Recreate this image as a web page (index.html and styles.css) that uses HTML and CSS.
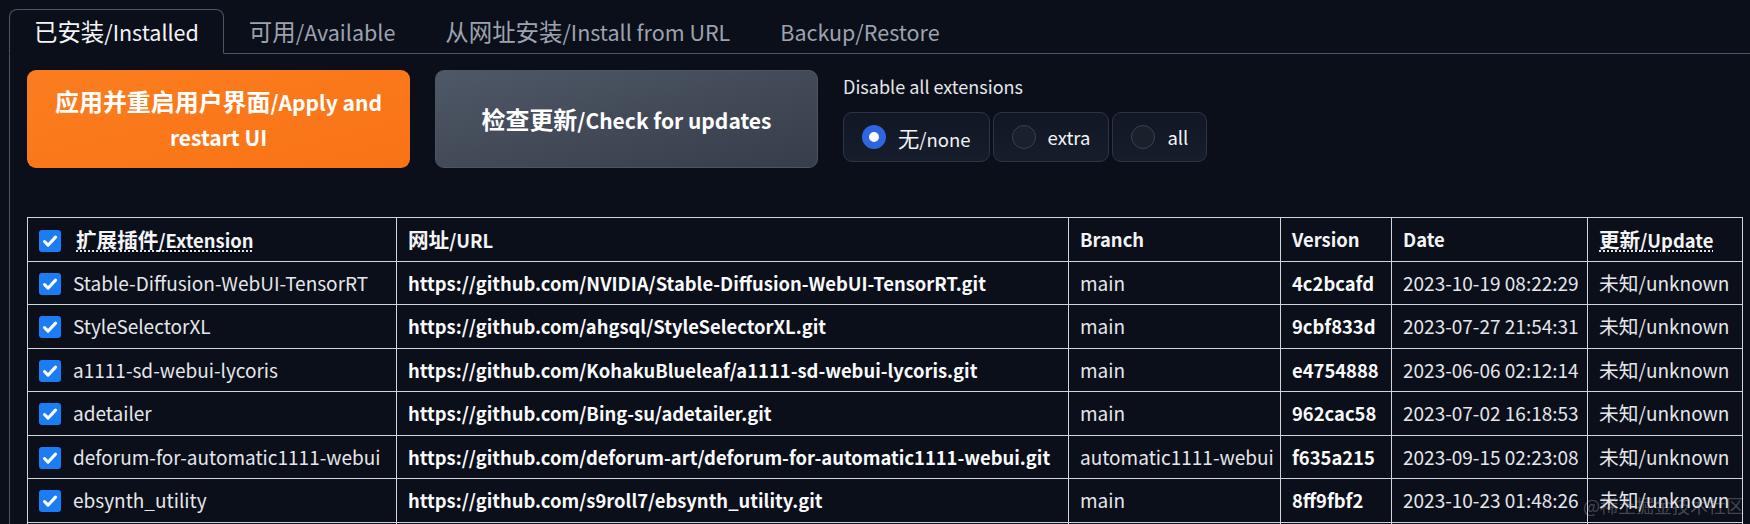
FILE: index.html
```html
<!DOCTYPE html>
<html>
<head>
    <meta charset="UTF-8">
    <title>Extensions</title>
<link rel="stylesheet" href="styles.css">
</head>
<body>

    <div class="tabs">
        <div class="tab-nav">
            <button class="tab active"><span class="zh">已安装</span>/Installed</button>
            <button class="tab"><span class="zh">可用</span>/Available</button>
            <button class="tab"><span class="zh">从网址安装</span>/Install from URL</button>
            <button class="tab">Backup/Restore</button>
        </div>

        <div class="panel">
            <div class="actions">
                <button class="btn primary"><span class="zh">应用并重启用户界面</span>/Apply and restart UI</button>
                <button class="btn secondary"><span class="zh">检查更新</span>/Check for updates</button>
                <div class="disable-group">
                    <span class="group-label">Disable all extensions</span>
                    <div class="radios">
                        <label class="radio selected"><span class="dot"></span><span><span class="zh">无</span>/none</span></label>
                        <label class="radio"><span class="dot"></span>extra</label>
                        <label class="radio"><span class="dot"></span>all</label>
                    </div>
                </div>
            </div>

            <table class="ext-table">
                <thead>
                    <tr>
                        <th class="col-name"><span class="check"></span><abbr><span class="zh">扩展插件</span>/Extension</abbr></th>
                        <th class="col-url"><span class="zh">网址</span>/URL</th>
                        <th class="col-branch">Branch</th>
                        <th class="col-version">Version</th>
                        <th class="col-date">Date</th>
                        <th class="col-update"><abbr><span class="zh">更新</span>/Update</abbr></th>
                    </tr>
                </thead>
                <tbody>
                    <tr>
                        <td><span class="check"></span>Stable-Diffusion-WebUI-TensorRT</td>
                        <td class="url">https://github.com/NVIDIA/Stable-Diffusion-WebUI-TensorRT.git</td>
                        <td>main</td>
                        <td class="version">4c2bcafd</td>
                        <td>2023-10-19 08:22:29</td>
                        <td><span class="zh">未知</span>/unknown</td>
                    </tr>
                    <tr>
                        <td><span class="check"></span>StyleSelectorXL</td>
                        <td class="url">https://github.com/ahgsql/StyleSelectorXL.git</td>
                        <td>main</td>
                        <td class="version">9cbf833d</td>
                        <td>2023-07-27 21:54:31</td>
                        <td><span class="zh">未知</span>/unknown</td>
                    </tr>
                    <tr>
                        <td><span class="check"></span>a1111-sd-webui-lycoris</td>
                        <td class="url">https://github.com/KohakuBlueleaf/a1111-sd-webui-lycoris.git</td>
                        <td>main</td>
                        <td class="version">e4754888</td>
                        <td>2023-06-06 02:12:14</td>
                        <td><span class="zh">未知</span>/unknown</td>
                    </tr>
                    <tr>
                        <td><span class="check"></span>adetailer</td>
                        <td class="url">https://github.com/Bing-su/adetailer.git</td>
                        <td>main</td>
                        <td class="version">962cac58</td>
                        <td>2023-07-02 16:18:53</td>
                        <td><span class="zh">未知</span>/unknown</td>
                    </tr>
                    <tr>
                        <td><span class="check"></span>deforum-for-automatic1111-webui</td>
                        <td class="url">https://github.com/deforum-art/deforum-for-automatic1111-webui.git</td>
                        <td>automatic1111-webui</td>
                        <td class="version">f635a215</td>
                        <td>2023-09-15 02:23:08</td>
                        <td><span class="zh">未知</span>/unknown</td>
                    </tr>
                    <tr>
                        <td><span class="check"></span>ebsynth_utility</td>
                        <td class="url">https://github.com/s9roll7/ebsynth_utility.git</td>
                        <td>main</td>
                        <td class="version">8ff9fbf2</td>
                        <td>2023-10-23 01:48:26</td>
                        <td><span class="zh">未知</span>/unknown</td>
                    </tr>
                    <tr>
                        <td><span class="check"></span>sd-webui-controlnet</td>
                        <td class="url">https://github.com/Mikubill/sd-webui-controlnet.git</td>
                        <td>main</td>
                        <td class="version">7a4805c8</td>
                        <td>2023-10-20 11:03:41</td>
                        <td><span class="zh">未知</span>/unknown</td>
                    </tr>
                </tbody>
            </table>
        </div>
    </div>

    <div class="watermark">@稀土掘金技术社区</div>

</body>
</html>
```

FILE: styles.css
```css
html,
body {
  margin: 0;
  width: 1750px;
  height: 524px;
  overflow: hidden;
  background-color: #0b0f19;
  color: #e5e7eb;
  font-family: "Noto Sans CJK SC", "Noto Sans", sans-serif;
}

.zh {
  font-size: 1.07em;
}

.tabs {
  padding: 9px 0 0 9px;
}

.tab-nav {
  display: flex;
  border-bottom: 1px solid #4b5563;
}

.tab {
  height: 45px;
  padding: 0 24px;
  margin-bottom: -1px;
  background: none;
  border: 1px solid transparent;
  border-radius: 8px 8px 0 0;
  color: #9ca3af;
  font-family: inherit;
  font-size: 21.5px;
  line-height: 28px;
  white-space: nowrap;
}

.tab .zh {
  font-size: 1.09em;
}

.tab.active {
  border-color: #4b5563;
  border-bottom-color: #0b0f19;
  background-color: #0b0f19;
  color: #f3f4f6;
}

.panel {
  border-left: 1px solid #4b5563;
  padding: 16px 0 0 17px;
}

.actions {
  display: flex;
  align-items: flex-start;
  gap: 25px;
}

.btn {
  width: 383px;
  height: 98px;
  padding: 0 18px;
  border: none;
  border-radius: 9px;
  color: #ffffff;
  font-family: inherit;
  font-size: 21px;
  font-weight: bold;
  line-height: 35px;
}

.btn .zh {
  font-size: 1.14em;
}

.btn.primary {
  background: linear-gradient(to bottom right, #fb7d1f, #f97316);
}

.btn.secondary {
  background: linear-gradient(to bottom right, #4f5866, #363d4b);
  border: 1px solid #4b5563;
}

.disable-group {
  display: flex;
  flex-direction: column;
  gap: 13px;
  padding-top: 3px;
}

.group-label {
  font-size: 18px;
  line-height: 26px;
  color: #e5e7eb;
}

.radios {
  display: flex;
  gap: 3px;
}

.radio {
  display: flex;
  align-items: center;
  gap: 12px;
  height: 50px;
  box-sizing: border-box;
  padding: 0 18px;
  border: 1px solid #2d3544;
  border-radius: 9px;
  background: linear-gradient(to top, #161d2b, #111724);
  font-size: 18.5px;
  color: #f3f4f6;
}

.radio .zh {
  font-size: 1.15em;
}

.dot {
  width: 24px;
  height: 24px;
  border-radius: 50%;
  border: 1px solid #3a4252;
  background-color: #1a202c;
  box-sizing: border-box;
}

.radio.selected .dot {
  border: 7px solid #2d66e0;
  background-color: #ffffff;
}

.ext-table {
  margin-top: 49px;
  width: 1715px;
  border-collapse: collapse;
  table-layout: fixed;
  font-size: 19px;
}

.ext-table th,
.ext-table td {
  box-sizing: border-box;
  height: 43.5px;
  padding: 0 11px;
  border: 1px solid #d1d5db;
  text-align: left;
  white-space: nowrap;
  overflow: hidden;
  line-height: 26px;
}

.ext-table th {
  font-weight: bold;
  font-size: 18.4px;
  color: #f3f4f6;
}

.ext-table th .check {
  margin-right: 15px;
}

.ext-table th .zh {
  font-size: 1.12em;
}

.ext-table td .zh {
  font-size: 1.04em;
}

.col-name { width: 369px; }
.col-url { width: 672px; }
.col-branch { width: 212px; }
.col-version { width: 111px; }
.col-date { width: 196px; }
.col-update { width: 155px; }

abbr {
  text-decoration: underline dotted;
  text-underline-offset: 3px;
}

.url,
.version {
  font-weight: bold;
  font-size: 18.4px;
  color: #f9fafb;
}

.check {
  display: inline-block;
  vertical-align: -4px;
  width: 22px;
  height: 22px;
  margin-right: 12px;
  border-radius: 3px;
  background-color: #1c7cf4;
  background-image: url("data:image/svg+xml,%3Csvg xmlns='http://www.w3.org/2000/svg' viewBox='0 0 20 20'%3E%3Cpath d='M5 10.5l3.2 3.3L15 6.5' fill='none' stroke='white' stroke-width='2.8' stroke-linecap='round' stroke-linejoin='round'/%3E%3C/svg%3E");
  background-size: 100%;
}

.watermark {
  position: absolute;
  left: 1583px;
  top: 492px;
  font-size: 18px;
  line-height: 26px;
  color: rgba(210, 210, 210, 0.3);
}
```
